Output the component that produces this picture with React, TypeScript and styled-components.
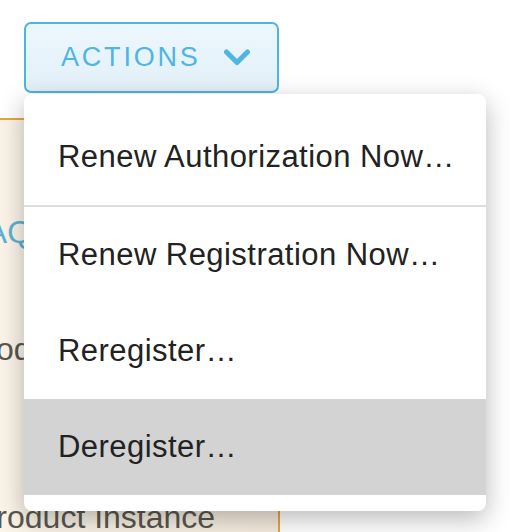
import styled, { createGlobalStyle } from 'styled-components';

const GlobalStyle = createGlobalStyle`
  html, body {
    margin: 0;
    padding: 0;
    background: #ffffff;
  }
  body {
    font-family: "Liberation Sans", Arial, sans-serif;
  }
`;

const Page = styled.div`
  position: relative;
  width: 510px;
  height: 532px;
  overflow: hidden;
`;

const Toolbar = styled.div`
  display: flex;
  padding: 22px 0 0 24px;
`;

const ActionsWrap = styled.div`
  position: relative;
`;

const ActionsButton = styled.button`
  display: flex;
  align-items: center;
  gap: 22px;
  box-sizing: border-box;
  width: 255px;
  height: 71px;
  padding: 0 0 0 35px;
  border: 2px solid #4db5e2;
  border-radius: 7px;
  background: linear-gradient(#ecf7fd, #e3f0f8);
  color: #4fb6e3;
  font-family: "Liberation Sans", Arial, sans-serif;
  font-size: 27px;
  letter-spacing: 2.8px;
  cursor: pointer;
`;

const Menu = styled.ul`
  position: absolute;
  top: 72px;
  left: 0;
  z-index: 2;
  box-sizing: border-box;
  width: 462px;
  margin: 0;
  padding: 15px 0 16px;
  list-style: none;
  background: #ffffff;
  border-radius: 8px;
  box-shadow: 0 8px 26px rgba(0, 0, 0, 0.28);
`;

const MenuItem = styled.li<{ $active?: boolean }>`
  display: flex;
  align-items: center;
  height: 96px;
  padding-left: 34px;
  background: ${(p) => (p.$active ? '#d3d3d3' : 'transparent')};
  color: #222222;
  font-size: 31px;
  letter-spacing: 0.45px;
`;

const Divider = styled.li`
  height: 2px;
  background: #dddddd;
`;

const Panel = styled.div`
  box-sizing: border-box;
  width: 320px;
  height: 420px;
  margin: 25px 0 0 -40px;
  padding-top: 94px;
  border-top: 2px solid #e9a43d;
  border-right: 2px solid #e9a43d;
  background: linear-gradient(90deg, #fcf5ea, #f6ecdf);
  font-size: 32px;
  line-height: 36px;
`;

const PanelLine = styled.div<{ $indent: number; $gap?: number; $link?: boolean }>`
  margin-top: ${(p) => p.$gap ?? 0}px;
  padding-left: ${(p) => p.$indent}px;
  color: ${(p) => (p.$link ? '#5ab3d3' : '#5a574f')};
  white-space: nowrap;
`;

function Chevron() {
  return (
    <svg width="28" height="20" viewBox="0 0 28 20" aria-hidden="true">
      <polyline
        points="3.5,4 14,14.5 24.5,4"
        fill="none"
        stroke="currentColor"
        strokeWidth="5"
        strokeLinecap="round"
        strokeLinejoin="round"
      />
    </svg>
  );
}

export default function App() {
  return (
    <Page>
      <GlobalStyle />
      <Toolbar>
        <ActionsWrap>
          <ActionsButton>
            ACTIONS
            <Chevron />
          </ActionsButton>
          <Menu>
            <MenuItem>Renew Authorization Now…</MenuItem>
            <Divider />
            <MenuItem>Renew Registration Now…</MenuItem>
            <MenuItem>Reregister…</MenuItem>
            <MenuItem $active>Deregister…</MenuItem>
          </Menu>
        </ActionsWrap>
      </Toolbar>
      <Panel>
        <PanelLine $indent={8} $link>
          FAQ
        </PanelLine>
        <PanelLine $indent={4} $gap={81}>
          Product Instances
        </PanelLine>
        <PanelLine $indent={15} $gap={132}>
          Product Instance
        </PanelLine>
      </Panel>
    </Page>
  );
}
